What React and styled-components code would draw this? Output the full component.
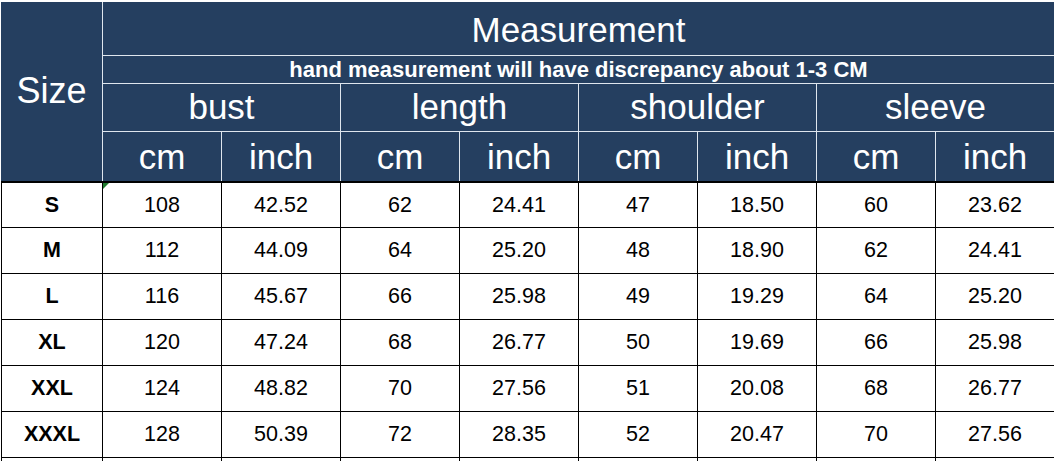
import React from 'react'
import styled, { createGlobalStyle } from 'styled-components'

const GlobalStyle = createGlobalStyle`
    html, body {
        margin: 0;
        padding: 0;
        background: #ffffff;
        overflow: hidden;
        height: 461px;
    }
    body {
        font-family: "Liberation Sans", Arial, sans-serif;
    }
`

const groups = ['bust', 'length', 'shoulder', 'sleeve']

const rows = [
    ['S', 108, '42.52', 62, '24.41', 47, '18.50', 60, '23.62'],
    ['M', 112, '44.09', 64, '25.20', 48, '18.90', 62, '24.41'],
    ['L', 116, '45.67', 66, '25.98', 49, '19.29', 64, '25.20'],
    ['XL', 120, '47.24', 68, '26.77', 50, '19.69', 66, '25.98'],
    ['XXL', 124, '48.82', 70, '27.56', 51, '20.08', 68, '26.77'],
    ['XXXL', 128, '50.39', 72, '28.35', 52, '20.47', 70, '27.56'],
    ['', '', '', '', '', '', '', '', ''],
]

function App() {
    return (
        <>
            <GlobalStyle />
            <Sheet>
                <Head>
                    <SizeCell>Size</SizeCell>
                    <TitleCell>Measurement</TitleCell>
                    <NoteCell>hand measurement will have discrepancy about 1-3 CM</NoteCell>
                    {groups.map((g) => (
                        <GroupCell key={g}>{g}</GroupCell>
                    ))}
                    {groups.map((g) => (
                        <React.Fragment key={g}>
                            <UnitCell>cm</UnitCell>
                            <UnitCell>inch</UnitCell>
                        </React.Fragment>
                    ))}
                </Head>
                <Body>
                    {rows.map((row, i) =>
                        row.map((value, j) => (
                            <DataCell key={`${i}-${j}`} $bold={j === 0} $marked={i === 0 && j === 1}>
                                {value}
                            </DataCell>
                        ))
                    )}
                </Body>
            </Sheet>
        </>
    )
}

export default App

const Sheet = styled.div`
    margin: 2px 0 0 1px;
    width: 1053px;
`

const Head = styled.div`
    display: grid;
    grid-template-columns: 101px repeat(8, 118px);
    grid-template-rows: 53px 27px 47px 49px;
    gap: 1px;
    background: #dfe6ee;
`

const HeadBase = styled.div`
    background: #253f60;
    color: #ffffff;
    display: flex;
    align-items: center;
    justify-content: center;
    font-size: 35px;
    line-height: 1;
    white-space: nowrap;
`

const SizeCell = styled(HeadBase)`
    grid-column: 1;
    grid-row: 1 / span 4;
    font-size: 36px;
    padding-bottom: 2px;
`

const TitleCell = styled(HeadBase)`
    grid-column: 2 / span 8;
    grid-row: 1;
    padding-top: 1px;
`

const NoteCell = styled(HeadBase)`
    grid-column: 2 / span 8;
    grid-row: 2;
    font-size: 22px;
    font-weight: bold;
    padding-top: 1px;
`

const GroupCell = styled(HeadBase)`
    grid-column: span 2;
    grid-row: 3;
    padding-bottom: 2px;
`

const UnitCell = styled(HeadBase)`
    grid-row: 4;
`

const Body = styled.div`
    display: grid;
    grid-template-columns: 100px repeat(8, 118px);
    grid-template-rows: 44px;
    grid-auto-rows: 45px;
    gap: 1px;
    padding: 1px 1px 0 1px;
    border-top: 1px solid #000000;
    background: #000000;
`

const DataCell = styled.div`
    position: relative;
    background: #ffffff;
    color: #000000;
    display: flex;
    align-items: center;
    justify-content: center;
    font-size: 21.5px;
    font-weight: ${(p) => (p.$bold ? 'bold' : 'normal')};

    &::before {
        content: '';
        display: ${(p) => (p.$marked ? 'block' : 'none')};
        position: absolute;
        top: 0;
        left: 0;
        border-top: 6px solid #1f7a2e;
        border-right: 6px solid transparent;
    }
`
